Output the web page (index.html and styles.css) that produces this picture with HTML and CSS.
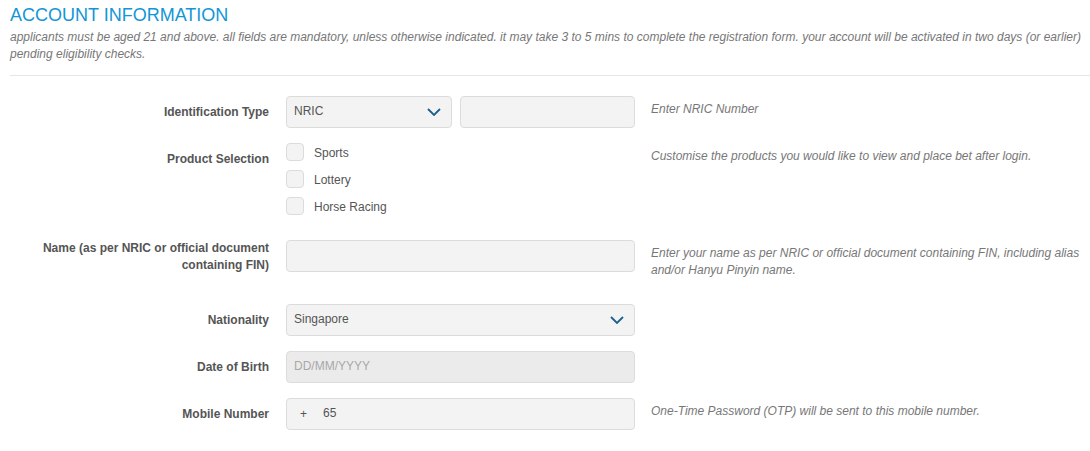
FILE: index.html
```
<!DOCTYPE html>
<html lang="en">
<head>
    <meta charset="UTF-8">
    <meta name="viewport" content="width=device-width, initial-scale=1.0">
    <title>Account Information</title>
    <link rel="stylesheet" href="styles.css">
</head>
<body>

<div class="page">
    <h1 class="section-title">ACCOUNT INFORMATION</h1>
    <p class="intro">applicants must be aged 21 and above. all fields are mandatory, unless otherwise indicated. it may take 3 to 5 mins to complete the registration form. your account will be activated in two days (or earlier) pending eligibility checks.</p>
    <hr class="divider">

    <form class="reg-form">
        <!-- Identification -->
        <div class="form-row">
            <label class="field-label">Identification Type</label>
            <div class="field-control split">
                <div class="select-wrap id-type">
                    <select class="field-input">
                        <option>NRIC</option>
                        <option>FIN</option>
                    </select>
                    <svg class="chevron" width="14" height="8" viewBox="0 0 14 8"><polyline points="1,1 7,7 13,1" fill="none" stroke="#1d5f8c" stroke-width="1.8"/></svg>
                </div>
                <input type="text" class="field-input id-number">
            </div>
            <div class="field-help">Enter NRIC Number</div>
        </div>

        <!-- Products -->
        <div class="form-row products">
            <label class="field-label">Product Selection</label>
            <div class="field-control checklist">
                <label class="check-item"><input type="checkbox" class="check-box"> Sports</label>
                <label class="check-item"><input type="checkbox" class="check-box"> Lottery</label>
                <label class="check-item"><input type="checkbox" class="check-box"> Horse Racing</label>
            </div>
            <div class="field-help">Customise the products you would like to view and place bet after login.</div>
        </div>

        <!-- Name -->
        <div class="form-row tall">
            <label class="field-label two-line">Name (as per NRIC or official document containing FIN)</label>
            <div class="field-control">
                <input type="text" class="field-input">
            </div>
            <div class="field-help">Enter your name as per NRIC or official document containing FIN, including alias and/or Hanyu Pinyin name.</div>
        </div>

        <!-- Nationality -->
        <div class="form-row">
            <label class="field-label">Nationality</label>
            <div class="field-control">
                <div class="select-wrap">
                    <select class="field-input">
                        <option>Singapore</option>
                    </select>
                    <svg class="chevron" width="14" height="8" viewBox="0 0 14 8"><polyline points="1,1 7,7 13,1" fill="none" stroke="#1d5f8c" stroke-width="1.8"/></svg>
                </div>
            </div>
            <div class="field-help"></div>
        </div>

        <!-- Date of birth -->
        <div class="form-row">
            <label class="field-label">Date of Birth</label>
            <div class="field-control">
                <input type="text" class="field-input disabled" placeholder="DD/MM/YYYY" disabled>
            </div>
            <div class="field-help"></div>
        </div>

        <!-- Mobile -->
        <div class="form-row">
            <label class="field-label">Mobile Number</label>
            <div class="field-control">
                <div class="field-input phone">
                    <span class="phone-prefix">+</span>
                    <input type="text" class="phone-number" value="65">
                </div>
            </div>
            <div class="field-help">One-Time Password (OTP) will be sent to this mobile number.</div>
        </div>
    </form>
</div>

</body>
</html>
```

FILE: styles.css
```
/* General reset */
* {
    margin: 0;
    padding: 0;
    box-sizing: border-box;
}

body {
    font-family: 'Liberation Sans', Arial, sans-serif;
    background-color: #fff;
    color: #555;
    font-size: 12px;
}

.page {
    padding: 4px 0 0 10px;
}

.section-title {
    font-size: 18px;
    font-weight: normal;
    line-height: 22px;
    color: #1296d6;
}

.intro {
    margin-top: 3px;
    font-style: italic;
    line-height: 17px;
    color: #777;
}

.divider {
    margin-top: 12px;
    border: none;
    border-top: 1px solid #e6e6e6;
}

/* Form layout */
.reg-form {
    padding-top: 20px;
}

.form-row {
    display: flex;
    align-items: flex-start;
    margin-bottom: 15px;
}

.form-row.products {
    margin-bottom: 25px;
}

.form-row.tall {
    margin-bottom: 25px;
}

.field-label {
    width: 259px;
    margin-right: 17px;
    padding-top: 8px;
    text-align: right;
    font-weight: bold;
    line-height: 17px;
    color: #555;
}

.field-label.two-line {
    padding-top: 0;
}

.field-control {
    width: 349px;
}

.field-control.split {
    display: flex;
    gap: 8px;
}

.field-help {
    margin-left: 16px;
    padding-top: 5px;
    flex: 1;
    padding-right: 10px;
    font-style: italic;
    line-height: 17px;
    color: #777;
}

/* Inputs */
.field-input {
    display: block;
    width: 100%;
    height: 32px;
    padding: 0 7px 2px;
    font-family: inherit;
    font-size: 12px;
    color: #555;
    background-color: #f3f3f3;
    border: 1px solid #dcdcdc;
    border-radius: 4px;
    outline: none;
}

.field-input.disabled {
    background-color: #ebebeb;
}

.field-input::placeholder {
    color: #a8a8a8;
}

select.field-input {
    appearance: none;
    -webkit-appearance: none;
}

.select-wrap {
    position: relative;
}

.select-wrap.id-type {
    width: 166px;
    flex: none;
}

.chevron {
    position: absolute;
    right: 11px;
    top: 12px;
    pointer-events: none;
}

.id-number {
    flex: 1;
}

/* Checkboxes */
.checklist {
    display: flex;
    flex-direction: column;
    gap: 9px;
}

.check-item {
    display: flex;
    align-items: center;
    gap: 10px;
    height: 18px;
    line-height: 18px;
    padding-top: 1px;
    color: #555;
}

.check-box {
    appearance: none;
    -webkit-appearance: none;
    width: 18px;
    height: 18px;
    margin-top: -1px;
    background-color: #f3f3f3;
    border: 1px solid #dcdcdc;
    border-radius: 4px;
}

/* Phone */
.phone {
    display: flex;
    align-items: center;
    padding: 0;
}

.phone-prefix {
    width: 36px;
    padding-left: 13px;
}

.phone-number {
    flex: 1;
    border: none;
    background: transparent;
    font-family: inherit;
    font-size: 12px;
    color: #555;
    outline: none;
    margin-bottom: 2px;
}
```
